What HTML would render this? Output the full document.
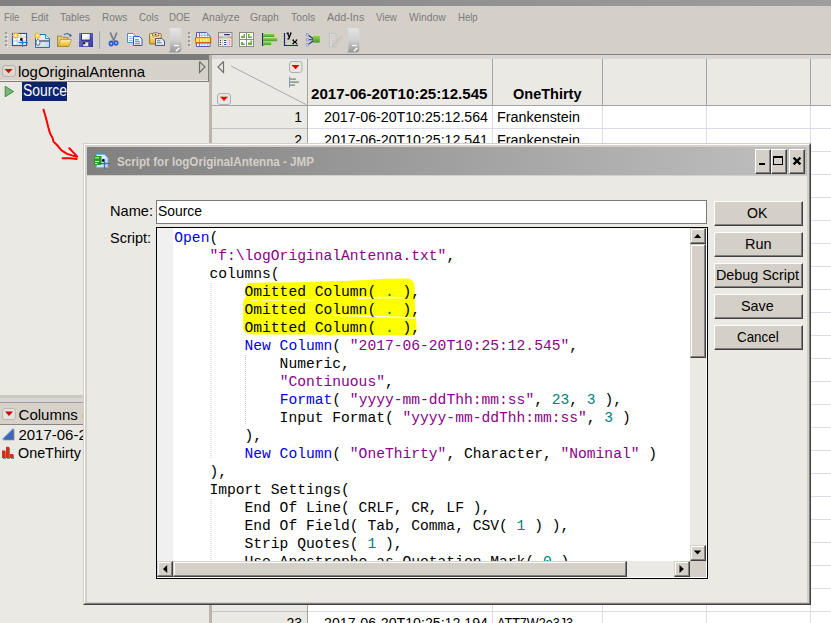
<!DOCTYPE html>
<html><head><meta charset="utf-8">
<style>
html,body{margin:0;padding:0;width:831px;height:623px;overflow:hidden;position:relative;background:#ebe9e4;font-family:"Liberation Sans",sans-serif;}
.a{position:absolute;}
.t{position:absolute;white-space:pre;line-height:1;}
.bx{position:absolute;box-sizing:border-box;}
.menu .t{font-size:11px;color:#7b7b7b;top:11.7px;}
.btn3d{position:absolute;box-sizing:border-box;background:#d4d0c8;border-top:1px solid #fff;border-left:1px solid #fff;border-right:1px solid #404040;border-bottom:1px solid #404040;box-shadow:inset -1px -1px 0 #808080;}
.sb3d{position:absolute;box-sizing:border-box;background:#d4d0c8;border-top:1px solid #d4d0c8;border-left:1px solid #d4d0c8;border-right:1px solid #404040;border-bottom:1px solid #404040;box-shadow:inset -1px -1px 0 #808080,inset 1px 1px 0 #fff;}
.code{position:absolute;left:174.3px;top:229.1px;font-family:"Liberation Mono",monospace;font-size:14.64px;line-height:18px;white-space:pre;color:#000;margin:0;}
.k{color:#0000f0}.s{color:#8a0088}.n{color:#008080}
</style></head><body>
<!-- top band -->
<div class="bx" style="left:0;top:0;width:831px;height:6px;background:linear-gradient(to right,#808080,#9e9e9e)"></div>
<div class="bx" style="left:0;top:6px;width:831px;height:48px;background:#d4d0c8"></div>
<div class="menu">
<div class="t" style="left: 3.6px; transform: scaleX(0.8684); transform-origin: 0px 0px;">File</div>
<div class="t" style="left: 30.5px; transform: scaleX(0.9226); transform-origin: 0px 0px;">Edit</div>
<div class="t" style="left: 60px; transform: scaleX(0.9435); transform-origin: 0px 0px;">Tables</div>
<div class="t" style="left: 101.7px; transform: scaleX(0.9195); transform-origin: 0px 0px;">Rows</div>
<div class="t" style="left: 138.5px; transform: scaleX(0.8948); transform-origin: 0px 0px;">Cols</div>
<div class="t" style="left: 169.3px; transform: scaleX(0.8807); transform-origin: 0px 0px;">DOE</div>
<div class="t" style="left: 201.6px; transform: scaleX(0.9581); transform-origin: 0px 0px;">Analyze</div>
<div class="t" style="left: 250.4px; transform: scaleX(0.9451); transform-origin: 0px 0px;">Graph</div>
<div class="t" style="left: 291px; transform: scaleX(0.9382); transform-origin: 0px 0px;">Tools</div>
<div class="t" style="left: 327.1px; transform: scaleX(0.9836); transform-origin: 0px 0px;">Add-Ins</div>
<div class="t" style="left: 376px; transform: scaleX(0.8835); transform-origin: 0px 0px;">View</div>
<div class="t" style="left: 409px; transform: scaleX(0.9406); transform-origin: 0px 0px;">Window</div>
<div class="t" style="left: 457.8px; transform: scaleX(0.8707); transform-origin: 0px 0px;">Help</div>
</div>
<!-- TOOLBAR -->
<div id="toolbar">
<svg class="a" style="left:0;top:0" width="370" height="56">
<defs>
<linearGradient id="chev" x1="0" y1="0" x2="0" y2="1"><stop offset="0" stop-color="#e4e4e4"></stop><stop offset="0.5" stop-color="#d0d0d0"></stop><stop offset="1" stop-color="#949494"></stop></linearGradient>
<linearGradient id="fold" x1="0" y1="0" x2="0" y2="1"><stop offset="0" stop-color="#fff2a8"></stop><stop offset="1" stop-color="#e8b020"></stop></linearGradient>
<linearGradient id="page" x1="0" y1="0" x2="1" y2="1"><stop offset="0" stop-color="#ffffff"></stop><stop offset="1" stop-color="#b8d4f0"></stop></linearGradient>
<linearGradient id="flop" x1="0" y1="0" x2="1" y2="1"><stop offset="0" stop-color="#7a7ae0"></stop><stop offset="1" stop-color="#3434a8"></stop></linearGradient><linearGradient id="lab" x1="0" y1="0" x2="1" y2="1"><stop offset="0.4" stop-color="#ffffff"></stop><stop offset="1" stop-color="#c8d4f0"></stop></linearGradient><linearGradient id="bars" x1="0" y1="0" x2="0" y2="1"><stop offset="0" stop-color="#8cd060"></stop><stop offset="1" stop-color="#4c9a2c"></stop></linearGradient>
</defs>
<!-- grip 1 -->
<g fill="#9a9a9a"><rect x="5" y="32" width="2" height="2"></rect><rect x="5" y="36" width="2" height="2"></rect><rect x="5" y="40" width="2" height="2"></rect><rect x="5" y="44" width="2" height="2"></rect></g>
<g fill="#fff"><rect x="7" y="34" width="1" height="1"></rect><rect x="7" y="38" width="1" height="1"></rect><rect x="7" y="42" width="1" height="1"></rect><rect x="7" y="46" width="1" height="1"></rect></g>
<!-- icon1 new table -->
<rect x="12.5" y="33.5" width="14" height="12" fill="#fff" stroke="#1a5cb0" stroke-width="1.2"></rect>
<g stroke="#e8a0a0" stroke-width="0.8"><line x1="13" y1="37" x2="26" y2="37"></line><line x1="13" y1="41" x2="26" y2="41"></line></g>
<g stroke="#a8c0e8" stroke-width="0.8"><line x1="17" y1="34" x2="17" y2="45"></line><line x1="21" y1="34" x2="21" y2="45"></line></g>
<g><circle cx="15.5" cy="35.5" r="2.6" fill="#f8d040"></circle><path d="M11.9,35.5 h7.2 M15.5,31.9 v7.2 M12.8,32.8 l5.4,5.4 M18.2,32.8 l-5.4,5.4" stroke="#f0c020" stroke-width="1.1"></path><circle cx="15.5" cy="35.5" r="1.3" fill="#fffbe0"></circle></g>
<circle cx="21.5" cy="39.5" r="1.4" fill="#000"></circle>
<path d="M18.5,42.6 Q22.5,42.1 28,42.6 Q22.5,43.1 18.5,42.6 Z M22.5,39 Q23,42.6 22.5,47 Q22,42.6 22.5,39 Z" fill="#1e88d0" stroke="#1e88d0" stroke-width="1"></path>
<!-- icon2 new script -->
<path d="M35.5,34.5 h10 l4,4 v9 h-14 z" fill="url(#page)" stroke="#2a6ab8" stroke-width="1"></path>
<path d="M45.5,34.5 v4 h4" fill="#dfeaf6" stroke="#2a6ab8" stroke-width="0.8"></path>
<path d="M40,41 h9" stroke="#6a6a6a" stroke-width="1.6"></path>
<ellipse cx="38" cy="42.5" rx="2" ry="3" fill="none" stroke="#6a6a6a" stroke-width="1"></ellipse>
<g><circle cx="37.5" cy="35.5" r="2.6" fill="#f8d040"></circle><path d="M33.9,35.5 h7.2 M37.5,31.9 v7.2 M34.8,32.8 l5.4,5.4 M40.2,32.8 l-5.4,5.4" stroke="#f0c020" stroke-width="1.1"></path><circle cx="37.5" cy="35.5" r="1.3" fill="#fffbe0"></circle></g>
<!-- folder -->
<path d="M57.5,36 h4 l1.5,1.5 h5 v9 h-10.5 z" fill="#e6c860" stroke="#8a7a50" stroke-width="0.8"></path>
<path d="M58,46.5 l2.5,-7 h11 l-2.5,7 z" fill="url(#fold)" stroke="#9a7a30" stroke-width="0.6"></path>
<path d="M64,35 q3,-3 6,0" fill="none" stroke="#5a80b8" stroke-width="1.2"></path>
<polygon points="69,34 72,35 70,37.5" fill="#2a5aa0"></polygon>
<!-- floppy -->
<rect x="79" y="33" width="14" height="14" fill="url(#flop)"></rect>
<rect x="81" y="33.6" width="9.6" height="7" fill="#2a2a98"></rect>
<rect x="82" y="34" width="7.8" height="5.6" fill="url(#lab)"></rect>
<rect x="83" y="42" width="5.6" height="4.4" fill="#e8e8f0"></rect>
<rect x="83.2" y="42.2" width="2" height="2" fill="#101018"></rect>
<rect x="83" y="42" width="5.6" height="4.4" fill="none" stroke="#303040" stroke-width="0.5"></rect>
<!-- separator -->
<rect x="99" y="31" width="1" height="18" fill="#a4a4b8"></rect>
<!-- scissors -->
<path d="M110.6,33.2 L113.6,40.5 M116.6,33.2 L113.6,40.5" stroke="#7a8290" stroke-width="1.8" stroke-linecap="round"></path>
<ellipse cx="111.2" cy="43.6" rx="2.6" ry="3" fill="#2c5ed0"></ellipse>
<ellipse cx="116" cy="43" rx="2.5" ry="2.8" fill="#2c5ed0"></ellipse>
<rect x="110.3" y="42.8" width="1.6" height="1.6" fill="#c8d0e0"></rect>
<rect x="115.3" y="42.2" width="1.5" height="1.5" fill="#c8d0e0"></rect>
<!-- copy -->
<path d="M127.5,33.5 h5.5 l2,2 v7 h-7.5 z" fill="#fafcff" stroke="#4a78c8" stroke-width="0.9"></path>
<path d="M129,36.6 h3.6 M129,38.6 h4 M129,40.6 h4" stroke="#8aaee0" stroke-width="0.9"></path>
<path d="M133.5,36.5 h6 l2.5,2.5 v6.5 h-8.5 z" fill="#f4f8ff" stroke="#2a58b8" stroke-width="1"></path>
<path d="M135,39.8 h4 M135,41.8 h5 M135,43.8 h5" stroke="#4a7ad0" stroke-width="1"></path>
<!-- paste -->
<rect x="149.6" y="33.6" width="11.6" height="10.4" rx="0.8" fill="url(#fold)" stroke="#7a5a18" stroke-width="0.8"></rect>
<path d="M152.6,36 v-1.6 q0,-1.6 1.6,-1.6 h3 q1.6,0 1.6,1.6 v1.6 z" fill="#f0e090" stroke="#6a5020" stroke-width="0.7"></path>
<circle cx="155.6" cy="34.4" r="0.7" fill="#403010"></circle>
<path d="M155.5,38.5 h6.5 l2.5,2.5 v4.5 h-9 z" fill="#dfe6f2" stroke="#404868" stroke-width="0.9"></path>
<path d="M157,40.8 h3 M157,42.8 h4.5" stroke="#607090" stroke-width="0.9"></path>
<!-- chevron 1 -->
<path d="M168,28 Q170,28.3 170,31 V50 Q170,52.4 168,52.6 H178 Q181.3,52.6 181.3,49.3 V31.3 Q181.3,28 178,28 Z" fill="url(#chev)"></path>
<path d="M174,45.5 h5" stroke="#fff" stroke-width="1.2"></path>
<path d="M176.3,50.8 L179,48.3" fill="none" stroke="#fff" stroke-width="1.5" stroke-linecap="round"></path>
<!-- grip 2 -->
<g fill="#9a9a9a"><rect x="188" y="32" width="2" height="2"></rect><rect x="188" y="36" width="2" height="2"></rect><rect x="188" y="40" width="2" height="2"></rect><rect x="188" y="44" width="2" height="2"></rect></g>
<g fill="#fff"><rect x="190" y="34" width="1" height="1"></rect><rect x="190" y="38" width="1" height="1"></rect><rect x="190" y="42" width="1" height="1"></rect><rect x="190" y="46" width="1" height="1"></rect></g>
<!-- table icon -->
<path d="M196.5,32.5 h10 l3.5,3.5 v10.5 h-13.5 z" fill="#ffffff" stroke="#5a5aa8" stroke-width="1"></path>
<g stroke="#8ab8f0" stroke-width="0.9"><line x1="197" y1="35.2" x2="209.5" y2="35.2"></line><line x1="197" y1="43.8" x2="209.5" y2="43.8"></line><line x1="201.8" y1="33" x2="201.8" y2="46"></line><line x1="204.8" y1="33" x2="204.8" y2="46"></line><line x1="207.6" y1="35" x2="207.6" y2="46"></line></g>
<path d="M207,33 l2.5,2.5 h-2.5 z" fill="#60a0e8"></path>
<line x1="199.5" y1="33" x2="199.5" y2="46.2" stroke="#f04050" stroke-width="0.9"></line>
<rect x="195.6" y="37.6" width="15" height="5.2" fill="#f4f060" stroke="#f07010" stroke-width="1.2"></rect>
<path d="M196.2,42.6 h14.4 v-4.6" fill="none" stroke="#c05010" stroke-width="0.8"></path>
<g stroke="#d8d050" stroke-width="0.7"><line x1="202.5" y1="38.4" x2="202.5" y2="42"></line><line x1="205.5" y1="38.4" x2="205.5" y2="42"></line><line x1="208.2" y1="38.4" x2="208.2" y2="42"></line></g>
<line x1="199.5" y1="38.4" x2="199.5" y2="42" stroke="#f08050" stroke-width="0.8"></line>
<!-- calculator -->
<rect x="218.5" y="32.5" width="13.5" height="14" fill="#d4d0c8" stroke="#8a8a8a" stroke-width="1"></rect>
<rect x="219.2" y="33.2" width="3" height="2.8" fill="#e6e2da"></rect>
<rect x="223" y="33.2" width="8.2" height="2.8" fill="#eeeae2"></rect>
<rect x="224" y="34" width="6" height="1.3" rx="0.6" fill="#283068"></rect>
<rect x="219" y="36.7" width="3.4" height="1.4" fill="#e8909a"></rect>
<rect x="223" y="36.7" width="4.6" height="1.4" fill="#b8c0e0"></rect>
<rect x="228.2" y="36.7" width="3.2" height="1.4" fill="#e8909a"></rect>
<rect x="219.2" y="38.8" width="3" height="7.4" fill="#eeeae2"></rect>
<rect x="223" y="38.8" width="4.4" height="7.4" fill="#eeeae2"></rect>
<rect x="228.2" y="38.8" width="3" height="7.4" fill="#eeeae2"></rect>
<g fill="#283068"><circle cx="220.4" cy="40.4" r="0.6"></circle><circle cx="220.4" cy="42.4" r="0.6"></circle><circle cx="220.4" cy="44.4" r="0.6"></circle></g>
<g fill="#2a5080"><rect x="224" y="39.9" width="2.4" height="1" rx="0.5"></rect><rect x="224" y="41.9" width="2.4" height="1" rx="0.5"></rect><rect x="224" y="43.9" width="2.4" height="1" rx="0.5"></rect></g>
<g fill="#e87080"><circle cx="229.6" cy="40.4" r="0.6"></circle><circle cx="229.6" cy="42.4" r="0.6"></circle><circle cx="229.6" cy="44.4" r="0.6"></circle></g>
<!-- grid icon -->
<rect x="239.5" y="32.5" width="14" height="14" fill="#fff" stroke="#8a8a8a" stroke-width="1"></rect>
<path d="M246.5,32.5 v14 M239.5,39.5 h14" stroke="#8a8a8a" stroke-width="1"></path>
<g fill="#6ab040"><path d="M241,38 h4 v-4 h-1.5 v2 h-2.5 z"></path><path d="M248,34 v4 h4 v-1.5 h-2.5 v-2.5 z"></path><path d="M241,45 v-3 h2 v1.5 h2 v1.5 z"></path><path d="M248,45 h4 v-4.5 h-1.5 v2 h-2.5 z"></path></g>
<!-- bars -->
<rect x="262" y="33" width="1.2" height="13" fill="#1a2a6a"></rect>
<rect x="263.2" y="34" width="11" height="3" fill="url(#bars)"></rect>
<rect x="263.2" y="38" width="14" height="3.2" fill="url(#bars)"></rect>
<rect x="263.2" y="42" width="8" height="3" fill="url(#bars)"></rect>
<!-- y_x -->
<path d="M284.5,33 v12.5 h13.5" fill="none" stroke="#1a2a6a" stroke-width="1.2"></path>
<path d="M286.6,33.2 h2.2 M290,33.2 h1.6 M287.6,33.2 L289.2,37.2 M290.8,33.2 L288.8,38.8 h-1.4" fill="none" stroke="#000" stroke-width="1.2"></path>
<path d="M292.8,40.2 L296.8,43.6 M296.8,40.2 L292.8,43.6 M292.4,40.2 h1.6 M295.8,40.2 h1.4 M292.4,43.6 h1.6 M295.8,43.6 h1.4" fill="none" stroke="#000" stroke-width="1.2"></path>
<!-- tree -->
<path d="M308,35 L313,38.5 M308,39.8 h5 M308,44.6 L313,41" stroke="#1a2a6a" stroke-width="1.1"></path>
<g fill="#c4cff0" stroke="#8094c8" stroke-width="0.6"><rect x="306.2" y="33.6" width="2.4" height="2.4"></rect><rect x="306.2" y="38.6" width="2.4" height="2.4"></rect><rect x="306.2" y="43.6" width="2.4" height="2.4"></rect></g>
<rect x="313" y="36" width="6.8" height="6.7" fill="url(#bars)"></rect>
<!-- disabled edit -->
<rect x="329.5" y="33.5" width="6.5" height="13.5" fill="#dcdad4" stroke="#c4c2bc" stroke-width="1"></rect>
<path d="M331,36 h3.5 M331,38.2 h3.5 M331,40.4 h3.5 M331,42.6 h3.5" stroke="#c4c2bc" stroke-width="0.8"></path>
<path d="M333,45.5 L341.6,36.4" stroke="#c8c6c2" stroke-width="2.6"></path>
<path d="M340.8,35.4 L342.6,37.2" stroke="#dcc8a4" stroke-width="2.2"></path>
<path d="M332.2,46.4 L333.4,45" stroke="#b8b6b0" stroke-width="1.2"></path>
<!-- chevron 2 -->
<path d="M346.5,28 Q348.5,28.3 348.5,31 V50 Q348.5,52.4 346.5,52.6 H356 Q359.3,52.6 359.3,49.3 V31.3 Q359.3,28 356,28 Z" fill="url(#chev)"></path>
<path d="M352,45.5 h5" stroke="#fff" stroke-width="1.2"></path>
<path d="M354.3,50.8 L357,48.3" fill="none" stroke="#fff" stroke-width="1.5" stroke-linecap="round"></path>
</svg>
</div>

<!-- separator line -->
<div class="bx" style="left:0;top:54px;width:831px;height:1px;background:#808080"></div>
<!-- left panel -->
<div class="bx" style="left:0;top:54px;width:209px;height:6px;background:#7b7b7b"></div>
<div class="bx" style="left:0;top:60px;width:209px;height:22px;background:#d6d2ca;border-bottom:1px solid #7e7e7e;border-right:1px solid #7e7e7e;box-shadow:inset 0 -1px 0 #ede9e1"></div>
<div class="bx" style="left:2px;top:65px;width:14px;height:12px;border:1px solid #b4b4b4;border-radius:3px;background:#dcd8d0"></div>
<svg class="a" style="left:0;top:0" width="210" height="110"><polygon points="4.6,68.9 12.6,68.9 8.6,73.3" fill="#dd0000"></polygon><polyline points="199.5,61.5 205,67 199.5,72.5 199.5,61.5" fill="none" stroke="#707070" stroke-width="1.2"></polyline></svg>
<div class="t" style="left: 18px; top: 64.3px; font-size: 15px; color: rgb(0, 0, 0); transform: scaleX(0.9953); transform-origin: 0px 0px;">logOriginalAntenna</div>
<svg class="a" style="left:0;top:0" width="80" height="110"><polygon points="5.2,86.3 13.6,91.5 5.2,96.7" fill="#78b878" stroke="#3c803c" stroke-width="0.9" stroke-linejoin="round"></polygon></svg>
<div class="bx" style="left:22px;top:82px;width:45px;height:19px;background:#0a246a"></div>
<div class="t" style="left: 22.6px; top: 83px; font-size: 16px; color: rgb(255, 255, 255); transform: scaleX(0.8678); transform-origin: 0px 0px;">Source</div>
<svg class="a" style="left:0;top:0" width="90" height="170"><path d="M43.5,109.6 L44.4,112.6 L45.7,117 L47.1,122.5 L48.5,128.1 L50.2,133.7 L52.4,137.4 L53.5,141.6 L57,145 L61.5,150.4 L67.1,153.9 L72.7,155.6 L77.2,156.8 M69.3,148.3 L77.2,156.4 M62.6,158.3 L70,158.3 L76.6,159" fill="none" stroke="#ff0000" stroke-width="2" stroke-linecap="round" stroke-linejoin="round"></path></svg>

<!-- columns section -->
<div class="bx" style="left:0;top:395px;width:209px;height:3px;background:#cdc9c1"></div>
<div class="bx" style="left:0;top:398px;width:209px;height:4px;background:#d6d6d6"></div>
<div class="bx" style="left:0;top:402px;width:209px;height:23px;background:#d6d2ca;border-top:1px solid #a0a0a0;border-bottom:1px solid #858585"></div>
<div class="bx" style="left:2px;top:408px;width:14px;height:12px;border:1px solid #b8b8b8;border-radius:3px;background:#e4e2dc"></div>
<svg class="a" style="left:0;top:400px" width="20" height="70"><polygon points="5,11.5 13,11.5 9,16" fill="#d00000"></polygon><polygon points="3,40.3 14.3,29 14.3,40.3" fill="#7a7a7a"></polygon><polygon points="2,39.3 13.3,28 13.3,39.3" fill="#3a68c0"></polygon><path d="M3.5,38.6 L12.8,29.3" stroke="#7aa0e8" stroke-width="0.8"></path><g fill="#8a8a8a"><rect x="3" y="51.5" width="3" height="7.5"></rect><rect x="7" y="47.8" width="3" height="11.2"></rect><rect x="11" y="55" width="3" height="4"></rect></g><g fill="#dd2a10"><rect x="2" y="50.5" width="3.2" height="7.5"></rect><rect x="6" y="46.8" width="3.2" height="11.2"></rect><rect x="10" y="54" width="3.2" height="4"></rect></g></svg>
<div class="t" style="left:18.6px;top:407.3px;font-size:15px;color:#000">Columns (2/0)</div>
<div class="t" style="left:18.4px;top:426.8px;font-size:15px;color:#000">2017-06-20T10:25:12.545</div>
<div class="t" style="left: 18.4px; top: 445.3px; font-size: 15px; color: rgb(0, 0, 0); transform: scaleX(0.9566); transform-origin: 0px 0px;">OneThirty</div>

<!-- splitter -->
<div class="bx" style="left:209px;top:55px;width:3px;height:568px;background:#b9b5ad"></div>

<!-- GRID -->
<div id="grid">
<div class="bx" style="left:212px;top:55px;width:619px;height:4px;background:#d6d6d6"></div>
<div class="bx" style="left:212px;top:59px;width:619px;height:46px;background:#ebe9e4"></div>
<div class="bx" style="left:307px;top:106px;width:524px;height:517px;background:#fff"></div>
<svg class="a" style="left:0;top:0" width="831" height="623"><rect x="307" y="59" width="1" height="47" fill="#a3a3a3"></rect><rect x="492" y="59" width="1" height="47" fill="#a3a3a3"></rect><rect x="602" y="59" width="1" height="47" fill="#a3a3a3"></rect><rect x="706" y="59" width="1" height="47" fill="#a3a3a3"></rect><rect x="810" y="59" width="1" height="47" fill="#a3a3a3"></rect><rect x="212" y="105" width="619" height="1" fill="#a3a3a3"></rect><rect x="212" y="128" width="95" height="1" fill="#c4c4c4"></rect><rect x="308" y="128" width="523" height="1" fill="#dcdce8"></rect><rect x="212" y="151" width="95" height="1" fill="#c4c4c4"></rect><rect x="308" y="151" width="523" height="1" fill="#dcdce8"></rect><rect x="212" y="174" width="95" height="1" fill="#c4c4c4"></rect><rect x="308" y="174" width="523" height="1" fill="#dcdce8"></rect><rect x="212" y="197" width="95" height="1" fill="#c4c4c4"></rect><rect x="308" y="197" width="523" height="1" fill="#dcdce8"></rect><rect x="212" y="220" width="95" height="1" fill="#c4c4c4"></rect><rect x="308" y="220" width="523" height="1" fill="#dcdce8"></rect><rect x="212" y="243" width="95" height="1" fill="#c4c4c4"></rect><rect x="308" y="243" width="523" height="1" fill="#dcdce8"></rect><rect x="212" y="266" width="95" height="1" fill="#c4c4c4"></rect><rect x="308" y="266" width="523" height="1" fill="#dcdce8"></rect><rect x="212" y="289" width="95" height="1" fill="#c4c4c4"></rect><rect x="308" y="289" width="523" height="1" fill="#dcdce8"></rect><rect x="212" y="312" width="95" height="1" fill="#c4c4c4"></rect><rect x="308" y="312" width="523" height="1" fill="#dcdce8"></rect><rect x="212" y="335" width="95" height="1" fill="#c4c4c4"></rect><rect x="308" y="335" width="523" height="1" fill="#dcdce8"></rect><rect x="212" y="358" width="95" height="1" fill="#c4c4c4"></rect><rect x="308" y="358" width="523" height="1" fill="#dcdce8"></rect><rect x="212" y="381" width="95" height="1" fill="#c4c4c4"></rect><rect x="308" y="381" width="523" height="1" fill="#dcdce8"></rect><rect x="212" y="404" width="95" height="1" fill="#c4c4c4"></rect><rect x="308" y="404" width="523" height="1" fill="#dcdce8"></rect><rect x="212" y="427" width="95" height="1" fill="#c4c4c4"></rect><rect x="308" y="427" width="523" height="1" fill="#dcdce8"></rect><rect x="212" y="450" width="95" height="1" fill="#c4c4c4"></rect><rect x="308" y="450" width="523" height="1" fill="#dcdce8"></rect><rect x="212" y="473" width="95" height="1" fill="#c4c4c4"></rect><rect x="308" y="473" width="523" height="1" fill="#dcdce8"></rect><rect x="212" y="496" width="95" height="1" fill="#c4c4c4"></rect><rect x="308" y="496" width="523" height="1" fill="#dcdce8"></rect><rect x="212" y="519" width="95" height="1" fill="#c4c4c4"></rect><rect x="308" y="519" width="523" height="1" fill="#dcdce8"></rect><rect x="212" y="542" width="95" height="1" fill="#c4c4c4"></rect><rect x="308" y="542" width="523" height="1" fill="#dcdce8"></rect><rect x="212" y="565" width="95" height="1" fill="#c4c4c4"></rect><rect x="308" y="565" width="523" height="1" fill="#dcdce8"></rect><rect x="212" y="588" width="95" height="1" fill="#c4c4c4"></rect><rect x="308" y="588" width="523" height="1" fill="#dcdce8"></rect><rect x="212" y="611" width="95" height="1" fill="#c4c4c4"></rect><rect x="308" y="611" width="523" height="1" fill="#dcdce8"></rect><rect x="492" y="106" width="1" height="517" fill="#dcdce8"></rect><rect x="602" y="106" width="1" height="517" fill="#dcdce8"></rect><rect x="706" y="106" width="1" height="517" fill="#dcdce8"></rect><rect x="810" y="106" width="1" height="517" fill="#dcdce8"></rect><rect x="307" y="106" width="1" height="517" fill="#a3a3a3"></rect><line x1="231" y1="66" x2="306.5" y2="104.8" stroke="#a8a8a8" stroke-width="1"></line><polyline points="223.5,61.5 218,67 223.5,72.5 223.5,61.5" fill="none" stroke="#707070" stroke-width="1.2"></polyline><rect x="289.5" y="61.5" width="12.5" height="11" rx="2.5" fill="#e9e7e2" stroke="#b0b0b0"></rect><polygon points="291.5,64.9 299.5,64.9 295.5,69.2" fill="#dd0000"></polygon><rect x="217.5" y="93.5" width="13" height="11" rx="2.5" fill="#e9e7e2" stroke="#b0b0b0"></rect><polygon points="220,96.8 228,96.8 224,101.1" fill="#dd0000"></polygon><rect x="289" y="76.5" width="1" height="11" fill="#8a9ac0"></rect><rect x="290" y="78.3" width="6" height="1.6" fill="#8aa08a"></rect><rect x="290" y="81.3" width="9" height="1.6" fill="#8aa08a"></rect><rect x="290" y="84.3" width="5" height="1.6" fill="#8aa08a"></rect></svg>
<div class="t" style="left: 311.2px; top: 86px; font-size: 15px; color: rgb(0, 0, 0); font-weight: bold; transform: scaleX(1.0078); transform-origin: 0px 0px;">2017-06-20T10:25:12.545</div>
<div class="t" style="left: 512.5px; top: 86.3px; font-size: 15px; color: rgb(0, 0, 0); font-weight: bold; transform: scaleX(0.9669); transform-origin: 0px 0px;">OneThirty</div>
<div class="t" style="left: 323.9px; top: 109.03px; font-size: 15.2px; color: rgb(0, 0, 0); transform: scaleX(0.9336); transform-origin: 0px 0px;">2017-06-20T10:25:12.564</div>
<div class="t" style="left: 496.5px; top: 109.03px; font-size: 15.2px; color: rgb(0, 0, 0); transform: scaleX(0.9454); transform-origin: 0px 0px;">Frankenstein</div>
<div class="t" style="left:212px;width:90px;text-align:right;transform:scaleX(0.92);transform-origin:100% 0;top:109.03px;font-size:15.2px">1</div>
<div class="t" style="left: 323.9px; top: 132.03px; font-size: 15.2px; color: rgb(0, 0, 0); transform: scaleX(0.9336); transform-origin: 0px 0px;">2017-06-20T10:25:12.541</div>
<div class="t" style="left: 496.5px; top: 132.03px; font-size: 15.2px; color: rgb(0, 0, 0); transform: scaleX(0.9454); transform-origin: 0px 0px;">Frankenstein</div>
<div class="t" style="left:212px;width:90px;text-align:right;transform:scaleX(0.92);transform-origin:100% 0;top:132.03px;font-size:15.2px">2</div>
<div class="t" style="left: 323.9px; top: 615.03px; font-size: 15.2px; color: rgb(0, 0, 0); transform: scaleX(0.9336); transform-origin: 0px 0px;">2017-06-20T10:25:12.194</div>
<div class="t" style="left: 496.5px; top: 615.03px; font-size: 15.2px; color: rgb(0, 0, 0); transform: scaleX(0.8286); transform-origin: 0px 0px;">ATT7W2e3J3</div>
<div class="t" style="left:212px;width:90px;text-align:right;transform:scaleX(0.92);transform-origin:100% 0;top:615.03px;font-size:15.2px">23</div>
</div>

<!-- DIALOG -->
<div id="dialog">
<div class="bx" style="left:83px;top:143px;width:728px;height:462px;background:#d4d0c8;border-top:1px solid #d4d0c8;border-left:1px solid #d4d0c8;border-right:1px solid #404040;border-bottom:1px solid #404040"></div>
<div class="bx" style="left:84px;top:144px;width:726px;height:460px;border-top:1px solid #fff;border-left:1px solid #fff;border-right:1px solid #808080;border-bottom:1px solid #808080"></div>
<div class="bx" style="left:87px;top:147px;width:720px;height:28px;background:linear-gradient(to right,#808080,#c0c0c0)"></div>
<div class="t" style="left: 117.4px; top: 155.8px; font-size: 12px; color: rgb(212, 208, 200); font-weight: bold; transform: scaleX(0.9688); transform-origin: 0px 0px;">Script for logOriginalAntenna - JMP</div>
<svg class="a" style="left:0;top:0" width="120" height="180">
<defs><linearGradient id="tpg" x1="0" y1="0" x2="1" y2="1"><stop offset="0" stop-color="#ffffff"></stop><stop offset="1" stop-color="#b0d0f0"></stop></linearGradient></defs>
<path d="M96.5,154.5 h8 l3.5,3.5 v9.5 h-11.5 z" fill="url(#tpg)" stroke="#7aaede" stroke-width="1"></path>
<rect x="94" y="156" width="7.5" height="9" fill="#1ea01e"></rect>
<path d="M95,157.8 h4 M95,161.5 h4 M95,163.6 h2.5" stroke="#e8ffe8" stroke-width="0.9"></path>
<circle cx="103.3" cy="160.4" r="1.4" fill="#000"></circle>
<path d="M101,163.5 Q104.5,163 110,163.5 Q104.5,164 101,163.5 Z M104.5,159.5 Q105,163.5 104.5,169 Q104,163.5 104.5,159.5 Z" fill="#1a7ac8" stroke="#1a7ac8" stroke-width="0.9"></path>
</svg>
<div class="btn3d" style="left:755px;top:149px;width:16px;height:25px"></div>
<div class="btn3d" style="left:771px;top:149px;width:16px;height:25px"></div>
<div class="btn3d" style="left:789px;top:149px;width:16px;height:25px"></div>
<svg class="a" style="left:0;top:0" width="831" height="200"><rect x="759" y="163" width="6" height="2" fill="#000"></rect><rect x="773.5" y="156.5" width="9" height="8" fill="none" stroke="#000" stroke-width="1"></rect><rect x="773" y="156" width="10" height="2" fill="#000"></rect><path d="M793.6,157.6 L800.4,164.4 M800.4,157.6 L793.6,164.4" stroke="#000" stroke-width="2.2"></path></svg>
<div class="bx" style="left:87px;top:175px;width:720px;height:1px;background:#d4d0c8"></div><div class="bx" style="left:87px;top:176px;width:720px;height:426px;background:#ebe9e4"></div>
<div class="t" style="left: 110.2px; top: 203.81px; font-size: 14.4px; color: rgb(0, 0, 0); transform: scaleX(1.0144); transform-origin: 0px 0px;">Name:</div>
<div class="t" style="left: 110.2px; top: 230.81px; font-size: 14.4px; color: rgb(0, 0, 0); transform: scaleX(1.005); transform-origin: 0px 0px;">Script:</div>
<div class="bx" style="left:156px;top:200px;width:551px;height:24px;background:#fff;border:1px solid #7a7a7a"></div>
<div class="t" style="left: 158px; top: 203.81px; font-size: 14.4px; color: rgb(0, 0, 0); transform: scaleX(0.9647); transform-origin: 0px 0px;">Source</div>
<div class="bx" style="left:156px;top:227px;width:552px;height:352px;background:#fff;border:1px solid #000"></div>
<div class="bx" style="left:157px;top:228px;width:16px;height:333px;background:#f0f0f0"></div>
<svg class="a" style="left:0;top:0" width="831" height="623"><path d="M250,282.8 C290,282.5 330,281.8 360,280.3 C380,279.2 395,278.2 406,278.6 C412,279 414.6,282 414.6,287 L414.8,300 C415.2,310 416,320 416.6,328 C416.8,333 415,335.5 410,335.6 C380,335.4 320,334.8 260,334.6 C248,334.6 243.4,333.5 243.3,328 L243.2,302 C243.2,299 246.5,298 246.6,294 L246.6,287 C246.6,284 247.5,282.8 250,282.8 Z" fill="#ffff00"></path>
<path d="M250,300.6 L316,300.1" stroke="#fff" stroke-width="0.7" stroke-dasharray="9,3,20,2,30,4"></path>
<path d="M357,298.4 C370,297.6 390,297.4 403,297.6" stroke="#fff" stroke-width="1.3" fill="none"></path>
<path d="M333,315.4 C360,315.8 390,316.8 415,318" stroke="#fff" stroke-width="1.4" fill="none"></path>
</svg>
<svg class="a" style="left:0;top:0" width="831" height="623"><line x1="211" y1="283" x2="211" y2="459" stroke="#c8c8c8" stroke-dasharray="1,1"></line><line x1="245.5" y1="355" x2="245.5" y2="424" stroke="#c8c8c8" stroke-dasharray="1,1"></line><line x1="211" y1="499" x2="211" y2="561" stroke="#c8c8c8" stroke-dasharray="1,1"></line></svg>
<div class="a" style="left:157px;top:228px;width:533px;height:333px;overflow:hidden"><pre class="code" style="left:17.3px;top:1.1px"><span class="k">Open</span>(
    <span class="s">"f:\logOriginalAntenna.txt"</span>,
    columns(
        Omitted Column( <span class="n">.</span> ),
        Omitted Column( <span class="n">.</span> ),
        Omitted Column( <span class="n">.</span> ),
        <span class="k">New Column</span>( <span class="s">"2017-06-20T10:25:12.545"</span>,
            Numeric,
            <span class="s">"Continuous"</span>,
            <span class="k">Format</span>( <span class="s">"yyyy-mm-ddThh:mm:ss"</span>, <span class="n">23</span>, <span class="n">3</span> ),
            Input Format( <span class="s">"yyyy-mm-ddThh:mm:ss"</span>, <span class="n">3</span> )
        ),
        <span class="k">New Column</span>( <span class="s">"OneThirty"</span>, Character, <span class="s">"Nominal"</span> )
    ),
    Import Settings(
        End Of Line( CRLF, CR, LF ),
        End Of Field( Tab, Comma, CSV( <span class="n">1</span> ) ),
        Strip Quotes( <span class="n">1</span> ),
        Use Apostrophe as Quotation Mark( <span class="n">0</span> ),
        Use Regional Settings( <span class="n">0</span> ),</pre></div>
<div class="bx" style="left:690px;top:228px;width:16px;height:333px;background:#ebe9e4"></div>
<div class="sb3d" style="left:690px;top:228px;width:16px;height:16px"></div>
<div class="sb3d" style="left:690px;top:244px;width:16px;height:114px"></div>
<div class="sb3d" style="left:690px;top:545px;width:16px;height:16px"></div>
<div class="bx" style="left:157px;top:561px;width:533px;height:16px;background:#ebe9e4"></div>
<div class="sb3d" style="left:157px;top:561px;width:16px;height:16px"></div>
<div class="sb3d" style="left:173px;top:561px;width:454px;height:16px"></div>
<div class="sb3d" style="left:674px;top:561px;width:16px;height:16px"></div>
<div class="bx" style="left:690px;top:561px;width:16px;height:16px;background:#d4d0c8"></div>
<svg class="a" style="left:0;top:0" width="831" height="623"><polygon points="694,238 701.2,238 697.6,234" fill="#000"></polygon><polygon points="693.8,550.5 701.2,550.5 697.5,554.5" fill="#000"></polygon><polygon points="167.2,565 167.2,573 163,569" fill="#000"></polygon><polygon points="679.5,565 679.5,573 683.8,569" fill="#000"></polygon></svg>
<div class="btn3d" style="left:714px;top:201px;width:89px;height:25px"></div>
<div class="t" style="left: 747.1px; top: 206.31px; font-size: 14.4px; color: rgb(0, 0, 0); transform: scaleX(0.9809); transform-origin: 0px 0px;">OK</div>
<div class="btn3d" style="left:714px;top:232px;width:89px;height:25px"></div>
<div class="t" style="left: 745px; top: 237.31px; font-size: 14.4px; color: rgb(0, 0, 0); transform: scaleX(1.0036); transform-origin: 0px 0px;">Run</div>
<div class="btn3d" style="left:714px;top:263px;width:89px;height:25px"></div>
<div class="t" style="left: 716.1px; top: 268.31px; font-size: 14.4px; color: rgb(0, 0, 0); transform: scaleX(0.9976); transform-origin: 0px 0px;">Debug Script</div>
<div class="btn3d" style="left:714px;top:294px;width:89px;height:25px"></div>
<div class="t" style="left: 740.8px; top: 299.31px; font-size: 14.4px; color: rgb(0, 0, 0); transform: scaleX(0.9966); transform-origin: 0px 0px;">Save</div>
<div class="btn3d" style="left:714px;top:325px;width:89px;height:25px"></div>
<div class="t" style="left: 736.5px; top: 330.31px; font-size: 14.4px; color: rgb(0, 0, 0); transform: scaleX(0.9309); transform-origin: 0px 0px;">Cancel</div>
</div>


</body></html>
